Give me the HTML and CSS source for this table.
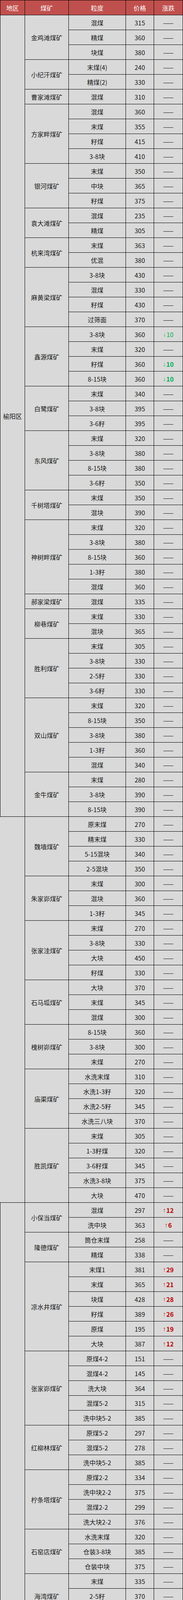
FILE: index.html
```html
<!DOCTYPE html>
<html lang="zh-CN">
<head>
<meta charset="utf-8">
<title>煤矿价格</title>
<link rel="stylesheet" href="styles.css">
</head>
<body>
<div class="sheet">
<div class="hd">地区</div><div class="hd">煤矿</div><div class="hd">粒度</div><div class="hd">价格</div><div class="hd">涨跌</div>

<div class="rg r54">榆阳区</div>
<div class="mn r3">金鸡滩煤矿</div><div>混煤</div><div>315</div><div>——</div>
<div>精煤</div><div>360</div><div>——</div>
<div>块煤</div><div>380</div><div>——</div>
<div class="mn r2">小纪汗煤矿</div><div>末煤(4)</div><div>240</div><div>——</div>
<div>精煤(2)</div><div>330</div><div>——</div>
<div class="mn">曹家滩煤矿</div><div>混煤</div><div>310</div><div>——</div>
<div class="mn r4">方家畔煤矿</div><div>混煤</div><div>360</div><div>——</div>
<div>末煤</div><div>355</div><div>——</div>
<div>籽煤</div><div>415</div><div>——</div>
<div>3-8块</div><div>410</div><div>——</div>
<div class="mn r3">银河煤矿</div><div>末煤</div><div>350</div><div>——</div>
<div>中块</div><div>365</div><div>——</div>
<div>籽煤</div><div>375</div><div>——</div>
<div class="mn r2">袁大滩煤矿</div><div>混煤</div><div>235</div><div>——</div>
<div>精煤</div><div>305</div><div>——</div>
<div class="mn r2">杭来湾煤矿</div><div>末煤</div><div>363</div><div>——</div>
<div>优混</div><div>380</div><div>——</div>
<div class="mn r4">麻黄梁煤矿</div><div>3-8块</div><div>430</div><div>——</div>
<div>混煤</div><div>330</div><div>——</div>
<div>籽煤</div><div>430</div><div>——</div>
<div>过筛面</div><div>370</div><div>——</div>
<div class="mn r4">鑫源煤矿</div><div>3-8块</div><div>360</div><div class="down light"><span class="arr">↓</span>10</div>
<div>末煤</div><div>320</div><div>——</div>
<div>籽煤</div><div>360</div><div class="down"><span class="arr">↓</span>10</div>
<div>8-15块</div><div>360</div><div class="down"><span class="arr">↓</span>10</div>
<div class="mn r3">白鹭煤矿</div><div>末煤</div><div>340</div><div>——</div>
<div>3-8块</div><div>395</div><div>——</div>
<div>3-6籽</div><div>395</div><div>——</div>
<div class="mn r4">东风煤矿</div><div>末煤</div><div>320</div><div>——</div>
<div>3-8块</div><div>380</div><div>——</div>
<div>8-15块</div><div>380</div><div>——</div>
<div>3-6籽</div><div>350</div><div>——</div>
<div class="mn r2">千树塔煤矿</div><div>末煤</div><div>350</div><div>——</div>
<div>混块</div><div>390</div><div>——</div>
<div class="mn r5">神树畔煤矿</div><div>末煤</div><div>320</div><div>——</div>
<div>3-8块</div><div>380</div><div>——</div>
<div>8-15块</div><div>360</div><div>——</div>
<div>1-3籽</div><div>380</div><div>——</div>
<div>混煤</div><div>360</div><div>——</div>
<div class="mn">郝家梁煤矿</div><div>混煤</div><div>335</div><div>——</div>
<div class="mn r2">柳巷煤矿</div><div>末煤</div><div>330</div><div>——</div>
<div>混块</div><div>365</div><div>——</div>
<div class="mn r4">胜利煤矿</div><div>末煤</div><div>305</div><div>——</div>
<div>3-8块</div><div>330</div><div>——</div>
<div>2-5籽</div><div>330</div><div>——</div>
<div>3-6籽</div><div>330</div><div>——</div>
<div class="mn r5">双山煤矿</div><div>末煤</div><div>320</div><div>——</div>
<div>8-15块</div><div>350</div><div>——</div>
<div>3-8块</div><div>380</div><div>——</div>
<div>1-3籽</div><div>360</div><div>——</div>
<div>混煤</div><div>340</div><div>——</div>
<div class="mn r3">金牛煤矿</div><div>末煤</div><div>280</div><div>——</div>
<div>3-8块</div><div>390</div><div>——</div>
<div>8-15块</div><div>390</div><div>——</div>

<div class="rg r26 open"></div>
<div class="mn r4">魏墙煤矿</div><div>原末煤</div><div>270</div><div>——</div>
<div>精末煤</div><div>330</div><div>——</div>
<div>5-15混块</div><div>340</div><div>——</div>
<div>2-5混块</div><div>350</div><div>——</div>
<div class="mn r3">朱家峁煤矿</div><div>末煤</div><div>300</div><div>——</div>
<div>混块</div><div>360</div><div>——</div>
<div>1-3籽</div><div>345</div><div>——</div>
<div class="mn r4">张家洼煤矿</div><div>末煤</div><div>270</div><div>——</div>
<div>3-8块</div><div>330</div><div>——</div>
<div>大块</div><div>450</div><div>——</div>
<div>籽煤</div><div>330</div><div>——</div>
<div class="mn r3">石马坬煤矿</div><div>大块</div><div>370</div><div>——</div>
<div>末煤</div><div>345</div><div>——</div>
<div>混煤</div><div>300</div><div>——</div>
<div class="mn r3">槐树峁煤矿</div><div>8-15块</div><div>360</div><div>——</div>
<div>3-8块</div><div>300</div><div>——</div>
<div>末煤</div><div>270</div><div>——</div>
<div class="mn r4">庙渠煤矿</div><div>水洗末煤</div><div>310</div><div>——</div>
<div>水洗1-3籽</div><div>320</div><div>——</div>
<div>水洗2-5籽</div><div>345</div><div>——</div>
<div>水洗三八块</div><div>370</div><div>——</div>
<div class="mn r5">胜凯煤矿</div><div>末煤</div><div>305</div><div>——</div>
<div>1-3籽煤</div><div>320</div><div>——</div>
<div>3-6籽煤</div><div>345</div><div>——</div>
<div>水洗3-8块</div><div>375</div><div>——</div>
<div>大块</div><div>470</div><div>——</div>

<div class="rg r70">神木</div>
<div class="mn r2">小保当煤矿</div><div>混煤</div><div>297</div><div class="up"><span class="arr">↑</span>12</div>
<div>洗中块</div><div>363</div><div class="up"><span class="arr">↑</span>6</div>
<div class="mn r2">隆德煤矿</div><div>筒仓末煤</div><div>258</div><div>——</div>
<div>精煤</div><div>338</div><div>——</div>
<div class="mn r6">凉水井煤矿</div><div>末煤1</div><div>381</div><div class="up"><span class="arr">↑</span>29</div>
<div>末煤</div><div>365</div><div class="up"><span class="arr">↑</span>21</div>
<div>块煤</div><div>428</div><div class="up"><span class="arr">↑</span>28</div>
<div>籽煤</div><div>389</div><div class="up"><span class="arr">↑</span>26</div>
<div>原煤</div><div>195</div><div class="up"><span class="arr">↑</span>19</div>
<div>大块</div><div>387</div><div class="up"><span class="arr">↑</span>12</div>
<div class="mn r5">张家峁煤矿</div><div>原煤4-2</div><div>151</div><div>——</div>
<div>混煤4-2</div><div>145</div><div>——</div>
<div>洗大块</div><div>364</div><div>——</div>
<div>混煤5-2</div><div>315</div><div>——</div>
<div>洗中块5-2</div><div>385</div><div>——</div>
<div class="mn r3">红柳林煤矿</div><div>原煤5-2</div><div>297</div><div>——</div>
<div>混煤5-2</div><div>278</div><div>——</div>
<div>洗中块5-2</div><div>385</div><div>——</div>
<div class="mn r4">柠条塔煤矿</div><div>原煤2-2</div><div>334</div><div>——</div>
<div>洗中块2-2</div><div>375</div><div>——</div>
<div>混煤2-2</div><div>299</div><div>——</div>
<div>洗大块2-2</div><div>376</div><div>——</div>
<div class="mn r3">石窑店煤矿</div><div>水洗末煤</div><div>320</div><div>——</div>
<div>仓装3-8块</div><div>385</div><div>——</div>
<div>仓装中块</div><div>375</div><div>——</div>
<div class="mn r3">海湾煤矿</div><div>末煤</div><div>335</div><div>——</div>
<div>2-5籽</div><div>370</div><div>——</div>
<div>3-8块</div><div>385</div><div>——</div>
<div class="mn r4">韩家湾煤矿</div><div>混煤</div><div>201</div><div>——</div>
<div>洗小块</div><div>343</div><div>——</div>
<div>洗中块</div><div>347</div><div>——</div>
<div>工程煤</div><div>65</div><div>——</div>
<div class="mn r6">崔家沟煤矿</div><div>水洗面煤</div><div>330</div><div>——</div>
<div>水洗1-3籽（过筛）</div><div>360</div><div>——</div>
<div>水洗2-5籽（过筛）</div><div>365</div><div>——</div>
<div>水洗3-8块</div><div>370</div><div>——</div>
<div>场中块（过筛）</div><div>330</div><div>——</div>
<div>场面煤（机采）</div><div>325</div><div>——</div>
<div class="mn r5">大砭窑煤矿</div><div>水洗末煤</div><div>350</div><div>——</div>
<div>水洗8-15块</div><div>490</div><div>——</div>
<div>水洗3-8块</div><div>500</div><div>——</div>
<div>水洗2-5籽</div><div>500</div><div>——</div>
<div>原煤中块</div><div>470</div><div>——</div>
<div class="mn r5">德泉煤矿</div><div>洗面煤</div><div>335</div><div>——</div>
<div>三八块</div><div>380</div><div>——</div>
<div>混煤</div><div>320</div><div>——</div>
<div>2-5籽</div><div>360</div><div>——</div>
<div>中块</div><div>380</div><div>——</div>
<div class="mn r6">神木嘉元煤业</div><div>水洗面煤</div><div>275</div><div>——</div>
<div>水洗2-5籽(不过筛)</div><div>305</div><div>——</div>
<div>水洗3-8块(不过筛)</div><div>340</div><div>——</div>
<div>水洗3-8块(过筛)</div><div>355</div><div>——</div>
<div>水洗中块(不过筛)</div><div>340</div><div>——</div>
<div>水洗中块(过筛)</div><div>355</div><div>——</div>
<div class="mn r6">东川煤矿</div><div>原煤</div><div>345</div><div>——</div>
<div>面煤</div><div>310</div><div>——</div>
<div>面籽</div><div>325</div><div>——</div>
<div>2-5籽</div><div>400</div><div>——</div>
<div>3-6籽</div><div>410</div><div>——</div>
<div>4-9块</div><div>440</div><div>——</div>
<div class="mn r6">狼窝渠煤矿</div><div>面煤</div><div>340</div><div>——</div>
<div>筛底煤</div><div>335</div><div>——</div>
<div>籽煤</div><div>390</div><div>——</div>
<div>3-8块</div><div>390</div><div>——</div>
<div>中块</div><div>330</div><div>——</div>
<div>工程煤（机采）</div><div>195</div><div>——</div>
<div class="mn r4">河畔煤矿</div><div>洗面煤</div><div>350</div><div>——</div>
<div>13籽</div><div>360</div><div>——</div>
<div>三八块</div><div>375</div><div>——</div>
<div>过筛三八块</div><div>385</div><div>——</div>

<div class="rg r33">府谷</div>
<div class="mn r2">南梁矿业</div><div>末煤</div><div>305</div><div>——</div>
<div>块煤</div><div>380</div><div>——</div>
<div class="mn">宝山煤矿</div><div>面煤</div><div>310</div><div>——</div>
<div class="mn r3">鸿锋煤矿</div><div>籽煤</div><div>300</div><div>——</div>
<div>三八块</div><div>310</div><div>——</div>
<div>面煤</div><div>283</div><div>——</div>
<div class="mn r3">恒益煤矿</div><div>水洗2-5籽</div><div>385</div><div>——</div>
<div>水洗4-9块</div><div>400</div><div>——</div>
<div>水洗末煤</div><div>300</div><div>——</div>
<div class="mn r5">青龙寺煤矿</div><div>水洗面煤</div><div>310</div><div>——</div>
<div>水洗2-5籽</div><div>390</div><div>——</div>
<div>水洗3-8块</div><div>400</div><div>——</div>
<div>水洗中块</div><div>390</div><div>——</div>
<div>水洗混块</div><div>365</div><div>——</div>
<div class="mn r5">瑞丰煤矿</div><div>面煤</div><div>315</div><div>——</div>
<div>水洗末煤</div><div>315</div><div>——</div>
<div>中块</div><div>395</div><div>——</div>
<div>5-8块</div><div>405</div><div>——</div>
<div>3-6籽</div><div>310</div><div>——</div>
<div class="mn r2">沙沟岔煤矿</div><div>混块</div><div>306</div><div>——</div>
<div>末煤</div><div>299</div><div>——</div>
<div class="mn r2">弘建煤矿</div><div>综采面煤</div><div>170</div><div>——</div>
<div>水洗2-5籽</div><div>395</div><div>——</div>
<div class="mn r3">普禾煤矿</div><div>块煤</div><div>370</div><div>——</div>
<div>原煤</div><div>210</div><div>——</div>
<div>面煤</div><div>200</div><div>——</div>
<div class="mn">谊丰煤矿</div><div>2-5籽</div><div>391</div><div>——</div>
<div class="mn r5">普泉煤矿</div><div>末煤</div><div>280</div><div>——</div>
<div>2-5籽</div><div>402</div><div>——</div>
<div>3-8块</div><div>435</div><div>——</div>
<div>中块</div><div>446</div><div>——</div>
<div>大块</div><div>517</div><div>——</div>
<div class="mn">亿隆煤矿</div><div>机掘原煤</div><div>280</div><div class="up"><span class="arr">↑</span>20</div>
</div>
</body>
</html>
```

FILE: styles.css
```css
html, body {
  margin: 0;
  padding: 0;
  background: #ffffff;
}

.sheet {
  display: grid;
  grid-template-columns: 62px 111px 145px 71px 73px;
  grid-auto-rows: 37px;
  gap: 1px;
  padding: 1px;
  width: 466px;
  background: #000000;
  font-family: "Noto Sans CJK SC", "Liberation Sans", sans-serif;
  font-size: 16px;
  color: #1a1a1a;
}

.sheet > div {
  display: flex;
  align-items: center;
  justify-content: center;
  background: #d9d9d9;
  white-space: nowrap;
  line-height: 20px;
}

.sheet > .hd {
  background: #c0504d;
  color: #ffffff;
}

.rg {
  grid-column: 1;
}

.mn {
  grid-column: 2;
}

.open {
  margin-left: -1px;
}

.r2 { grid-row: span 2; }
.r3 { grid-row: span 3; }
.r4 { grid-row: span 4; }
.r5 { grid-row: span 5; }
.r6 { grid-row: span 6; }
.r26 { grid-row: span 26; }
.r33 { grid-row: span 33; }
.r54 { grid-row: span 54; }
.r70 { grid-row: span 70; }

.up {
  color: #c00000;
  font-weight: bold;
}

.down {
  color: #00b050;
  font-weight: bold;
}

.down.light {
  font-weight: normal;
}

.arr {
  font-family: "Liberation Sans", sans-serif;
  font-size: 15px;
  margin-right: 1px;
}
```
